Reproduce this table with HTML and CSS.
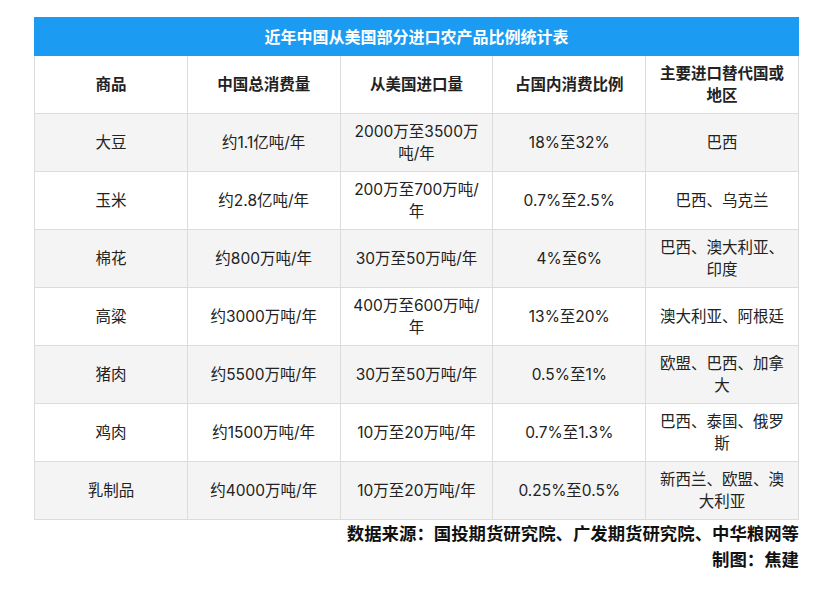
FILE: index.html
```html
<!DOCTYPE html>
<html lang="zh">
<head>
<meta charset="utf-8">
<title>近年中国从美国部分进口农产品比例统计表</title>
<link rel="stylesheet" href="styles.css">
</head>
<body>
<div class="wrap">
  <table class="stats">
    <colgroup><col><col><col><col><col></colgroup>
    <thead>
      <tr><th colspan="5" class="title">近年中国从美国部分进口农产品比例统计表</th></tr>
      <tr class="head">
        <th>商品</th><th>中国总消费量</th><th>从美国进口量</th><th>占国内消费比例</th><th>主要进口替代国或地区</th>
      </tr>
    </thead>
    <tbody>
      <tr class="alt"><td>大豆</td><td>约1.1亿吨/年</td><td>2000万至3500万吨/年</td><td>18%至32%</td><td>巴西</td></tr>
      <tr><td>玉米</td><td>约2.8亿吨/年</td><td>200万至700万吨/年</td><td>0.7%至2.5%</td><td>巴西、乌克兰</td></tr>
      <tr class="alt"><td>棉花</td><td>约800万吨/年</td><td>30万至50万吨/年</td><td>4%至6%</td><td>巴西、澳大利亚、印度</td></tr>
      <tr><td>高粱</td><td>约3000万吨/年</td><td>400万至600万吨/年</td><td>13%至20%</td><td>澳大利亚、阿根廷</td></tr>
      <tr class="alt"><td>猪肉</td><td>约5500万吨/年</td><td>30万至50万吨/年</td><td>0.5%至1%</td><td>欧盟、巴西、加拿大</td></tr>
      <tr><td>鸡肉</td><td>约1500万吨/年</td><td>10万至20万吨/年</td><td>0.7%至1.3%</td><td>巴西、泰国、俄罗斯</td></tr>
      <tr class="alt"><td>乳制品</td><td>约4000万吨/年</td><td>10万至20万吨/年</td><td>0.25%至0.5%</td><td>新西兰、欧盟、澳大利亚</td></tr>
    </tbody>
  </table>
  <div class="source">
    <p>数据来源：国投期货研究院、广发期货研究院、中华粮网等</p>
    <p>制图：焦建</p>
  </div>
</div>
</body>
</html>
```
FILE: styles.css
```css
html, body {
  margin: 0;
  padding: 0;
  background: #ffffff;
}
body {
  font-family: Inter, "Noto Sans CJK SC", "Noto Sans", sans-serif;
  color: #222222;
}
.wrap {
  width: 765px;
  margin: 17px 0 0 34px;
}
.stats {
  width: 765px;
  table-layout: fixed;
  border-collapse: collapse;
  border: 1px solid #a3a3a3;
}
.stats th, .stats td {
  border: 1px solid #dcdcdc;
  padding: 0 9px;
  text-align: center;
  vertical-align: middle;
  font-size: 15.5px;
  line-height: 21.5px;
  height: 58px;
  box-sizing: border-box;
}
.stats td {
  font-weight: 400;
}
.stats th.title {
  background: #1b9cf2;
  color: #ffffff;
  font-size: 16px;
  font-weight: 700;
  height: 38px;
  border: 1px solid #1b9cf2;
  line-height: 20px;
}
.head th {
  font-weight: 700;
  background: #ffffff;
}
.alt td {
  background: #f4f4f4;
}
.source {
  text-align: right;
  font-size: 17.4px;
  font-weight: 700;
  color: #111111;
  padding-top: 1px;
}
.source p {
  margin: 0;
  line-height: 26px;
}
```
